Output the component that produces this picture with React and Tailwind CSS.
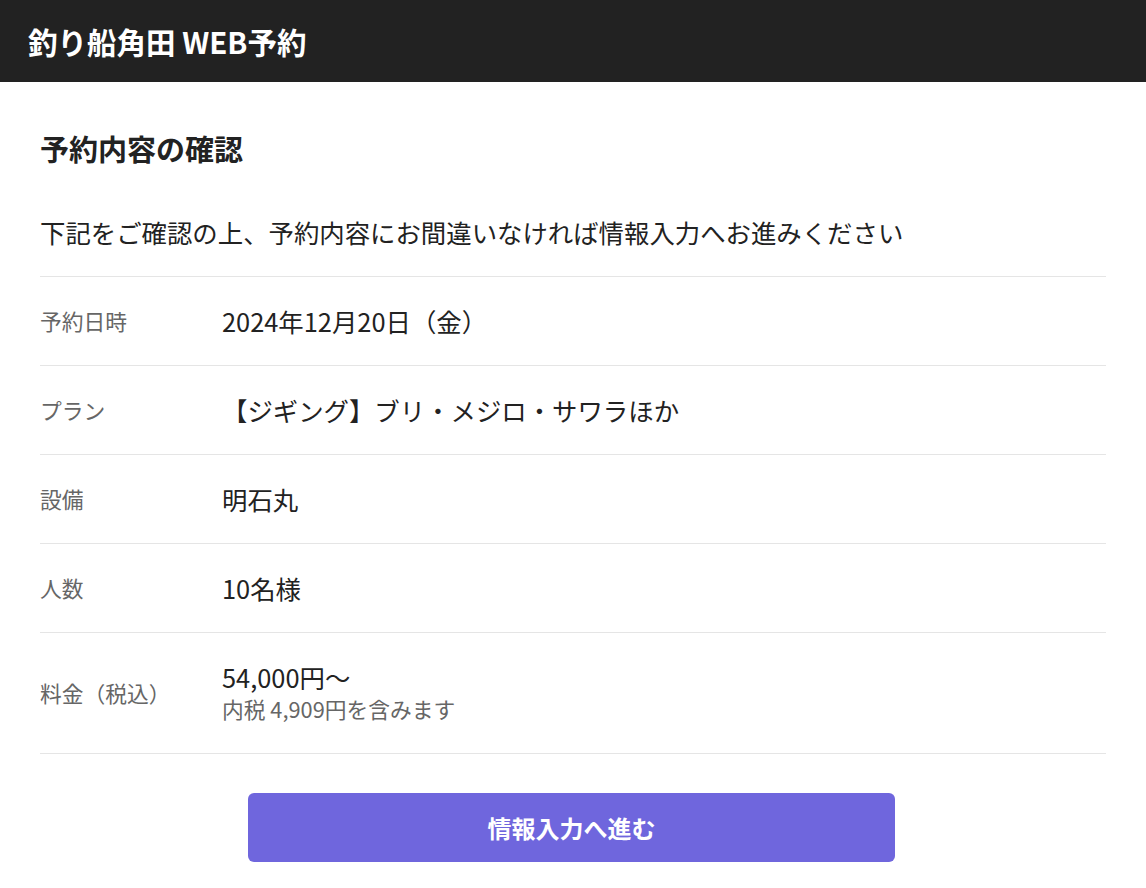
import React from 'react'

const rows = [
  { label: '予約日時', value: '2024年12月20日（金）' },
  { label: 'プラン', value: '【ジギング】ブリ・メジロ・サワラほか' },
  { label: '設備', value: '明石丸' },
  { label: '人数', value: '10名様' },
]

const App = () => {
  return (
    <div className="min-h-screen bg-white text-[#222] font-['Noto_Sans_CJK_JP','Noto_Sans',sans-serif]">
      <header className="h-[82px] bg-[#222222] flex items-center px-7">
        <h1 className="text-white text-[29.5px] leading-9 font-bold">釣り船角田 WEB予約</h1>
      </header>

      <main className="px-10 pt-12 pb-6">
        <h2 className="text-[29px] leading-9 font-bold">予約内容の確認</h2>
        <p className="mt-[50px] text-[25.4px] leading-8">
          下記をご確認の上、予約内容にお間違いなければ情報入力へお進みください
        </p>

        <dl className="mt-7 border-t border-[#e5e5e5]">
          {rows.map((r) => (
            <div key={r.label} className="flex items-center py-7 border-b border-[#e5e5e5]">
              <dt className="w-[182px] shrink-0 text-[21.75px] leading-8 text-[#666]">{r.label}</dt>
              <dd className="text-[25.4px] leading-8">{r.value}</dd>
            </div>
          ))}
          <div className="flex items-center py-7 border-b border-[#e5e5e5]">
            <dt className="w-[182px] shrink-0 text-[21.75px] leading-8 text-[#666]">料金（税込）</dt>
            <dd>
              <div className="text-[25.4px] leading-8">54,000円〜</div>
              <div className="text-[21.75px] leading-8 text-[#666]">内税 4,909円を含みます</div>
            </dd>
          </div>
        </dl>

        <div className="flex justify-center mt-[39px] pr-[3px]">
          <button className="w-[647px] h-[69px] rounded-md bg-[#6f66dd] text-white text-[24px] font-bold">
            情報入力へ進む
          </button>
        </div>
      </main>
    </div>
  )
}

export default App
